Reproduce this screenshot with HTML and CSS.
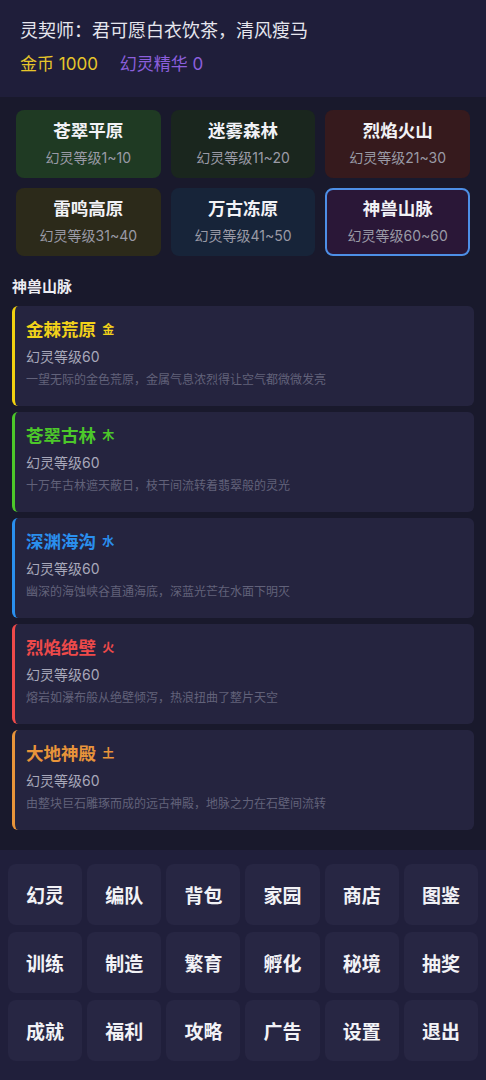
FILE: index.html
```html
<!DOCTYPE html>
<html lang="zh">
<head>
    <meta charset="UTF-8">
    <meta name="viewport" content="width=device-width, initial-scale=1.0">
    <title>幻灵</title>
    <link rel="stylesheet" href="styles.css">
</head>
<body>
    <header class="top">
        <div class="player">灵契师：君可愿白衣饮茶，清风瘦马</div>
        <div class="money">
            <span class="gold">金币 1000</span>
            <span class="essence">幻灵精华 0</span>
        </div>
    </header>
    <main>
        <div class="regions">
            <div class="region r-green"><div class="r-name">苍翠平原</div><div class="r-lv">幻灵等级1~10</div></div>
            <div class="region r-forest"><div class="r-name">迷雾森林</div><div class="r-lv">幻灵等级11~20</div></div>
            <div class="region r-fire"><div class="r-name">烈焰火山</div><div class="r-lv">幻灵等级21~30</div></div>
            <div class="region r-thunder"><div class="r-name">雷鸣高原</div><div class="r-lv">幻灵等级31~40</div></div>
            <div class="region r-ice"><div class="r-name">万古冻原</div><div class="r-lv">幻灵等级41~50</div></div>
            <div class="region r-beast active"><div class="r-name">神兽山脉</div><div class="r-lv">幻灵等级60~60</div></div>
        </div>
        <h3 class="section">神兽山脉</h3>
        <div class="maps">
            <div class="map metal">
                <div class="m-name">金棘荒原 <span class="tag">金</span></div>
                <div class="m-lv">幻灵等级60</div>
                <div class="m-desc">一望无际的金色荒原，金属气息浓烈得让空气都微微发亮</div>
            </div>
            <div class="map wood">
                <div class="m-name">苍翠古林 <span class="tag">木</span></div>
                <div class="m-lv">幻灵等级60</div>
                <div class="m-desc">十万年古林遮天蔽日，枝干间流转着翡翠般的灵光</div>
            </div>
            <div class="map water">
                <div class="m-name">深渊海沟 <span class="tag">水</span></div>
                <div class="m-lv">幻灵等级60</div>
                <div class="m-desc">幽深的海蚀峡谷直通海底，深蓝光芒在水面下明灭</div>
            </div>
            <div class="map fire">
                <div class="m-name">烈焰绝壁 <span class="tag">火</span></div>
                <div class="m-lv">幻灵等级60</div>
                <div class="m-desc">熔岩如瀑布般从绝壁倾泻，热浪扭曲了整片天空</div>
            </div>
            <div class="map earth">
                <div class="m-name">大地神殿 <span class="tag">土</span></div>
                <div class="m-lv">幻灵等级60</div>
                <div class="m-desc">由整块巨石雕琢而成的远古神殿，地脉之力在石壁间流转</div>
            </div>
        </div>
    </main>
    <nav class="menu">
        <button>幻灵</button>
        <button>编队</button>
        <button>背包</button>
        <button>家园</button>
        <button>商店</button>
        <button>图鉴</button>
        <button>训练</button>
        <button>制造</button>
        <button>繁育</button>
        <button>孵化</button>
        <button>秘境</button>
        <button>抽奖</button>
        <button>成就</button>
        <button>福利</button>
        <button>攻略</button>
        <button>广告</button>
        <button>设置</button>
        <button>退出</button>
    </nav>
</body>
</html>
```

FILE: styles.css
```css
body {
    margin: 0;
    padding: 0;
    background-color: #19192c;
    font-family: Inter, "Noto Sans CJK SC", sans-serif;
    color: #e8e8f0;
}
.top {
    height: 97px;
    box-sizing: border-box;
    padding: 18px 20px 0;
    background-color: #1f1e3a;
}
.player {
    font-size: 18px;
    line-height: 26px;
    color: #e6e6ee;
}
.money {
    margin-top: 7px;
    font-size: 17px;
    line-height: 26px;
}
.gold {
    color: #e6c62a;
}
.essence {
    color: #8b5fdc;
    margin-left: 17px;
}
main {
    padding: 13px 0 20px;
}
.regions {
    display: grid;
    grid-template-columns: repeat(3, 1fr);
    gap: 10px;
    padding: 0 16px;
}
.region {
    height: 68px;
    box-sizing: border-box;
    padding: 7px 0 0;
    border: 2px solid transparent;
    border-radius: 8px;
    text-align: center;
}
.r-name {
    font-size: 17.5px;
    font-weight: bold;
    line-height: 24px;
    color: #f2f2f6;
}
.r-lv {
    margin-top: 5px;
    font-size: 14px;
    line-height: 20px;
    color: #9a9aa6;
}
.r-green { background-color: #1f3a23; }
.r-forest { background-color: #1a261e; }
.r-fire { background-color: #361a1d; }
.r-thunder { background-color: #2c2a1a; }
.r-ice { background-color: #172439; }
.r-beast { background-color: #2a1737; }
.region.active {
    border-color: #4d8fe6;
}
.section {
    margin: 20px 12px 8px;
    font-size: 15px;
    line-height: 22px;
    font-weight: bold;
    color: #ececf2;
}
.maps {
    display: flex;
    flex-direction: column;
    gap: 6px;
    padding: 0 12px;
}
.map {
    height: 100px;
    box-sizing: border-box;
    padding: 12px 11px 0;
    background-color: #25243f;
    border-left: 3px solid;
    border-radius: 6px;
}
.m-name {
    font-size: 17.5px;
    font-weight: bold;
    line-height: 24px;
}
.tag {
    font-size: 12px;
    margin-left: 2px;
    vertical-align: 2px;
}
.m-lv {
    margin-top: 5px;
    font-size: 14px;
    line-height: 20px;
    color: #a8a8ba;
}
.m-desc {
    margin-top: 4px;
    font-size: 12px;
    line-height: 18px;
    color: #62627a;
}
.metal { border-color: #f0d010; color: #f2d21a; }
.wood { border-color: #4cc82a; color: #4cc82a; }
.water { border-color: #2a8fee; color: #2a8fee; }
.fire { border-color: #ee4a4a; color: #ee4a4a; }
.earth { border-color: #e8943a; color: #e8943a; }
.menu {
    display: grid;
    grid-template-columns: repeat(6, 1fr);
    grid-auto-rows: 61px;
    column-gap: 5px;
    row-gap: 7px;
    padding: 14px 8px 19px;
    background-color: #201f3b;
}
.menu button {
    border: none;
    border-radius: 8px;
    background-color: #272643;
    color: #f2f2f6;
    font-family: Inter, "Noto Sans CJK SC", sans-serif;
    font-size: 19px;
    font-weight: bold;
    cursor: pointer;
}
```
